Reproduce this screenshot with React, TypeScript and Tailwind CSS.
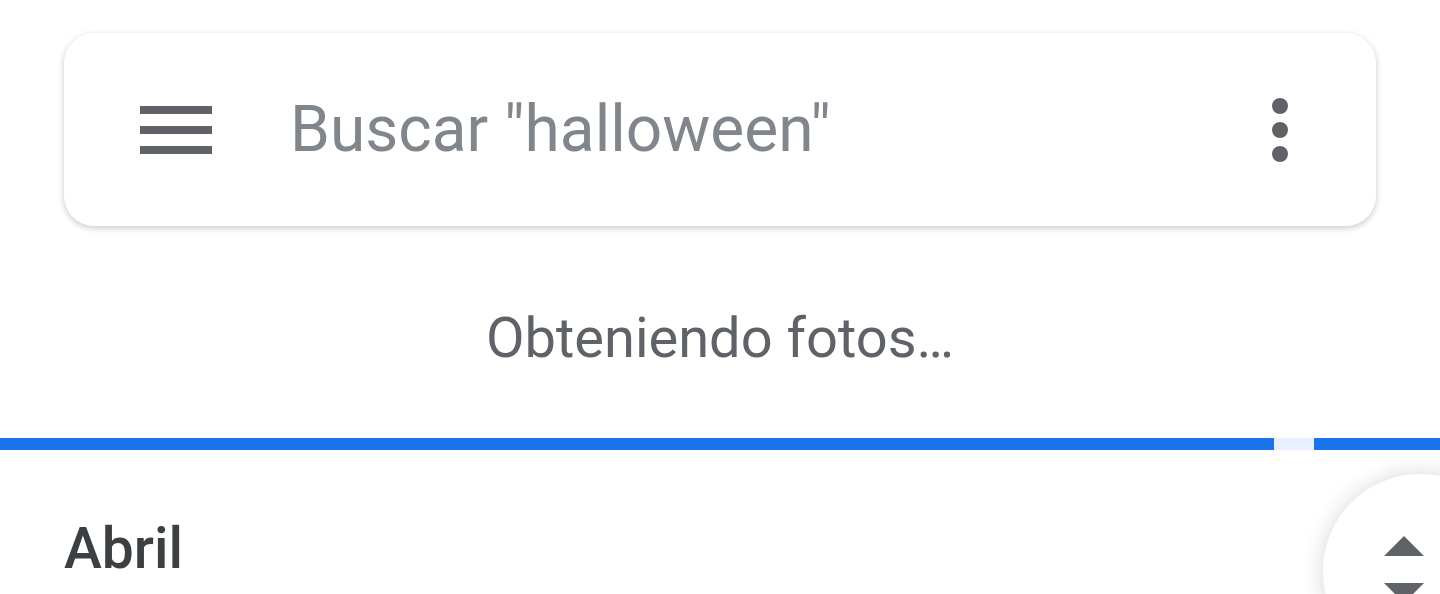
import { useState } from 'react';

const SearchBar = ({ placeholder }: { placeholder: string }) => (
  <div className="mx-16 mt-[33px] h-[193px] rounded-[30px] bg-white shadow-[0_2px_6px_rgba(0,0,0,0.22)] flex items-center pl-[76px] pr-[88px]">
    {/* Menu */}
    <div className="w-[72px] flex flex-col gap-3 shrink-0">
      <span className="block h-2 bg-[#5f6368]" />
      <span className="block h-2 bg-[#5f6368]" />
      <span className="block h-2 bg-[#5f6368]" />
    </div>
    <p className="ml-[78px] flex-1 text-[64px] leading-none text-[#80868b]">
      {placeholder}
    </p>
    {/* More */}
    <div className="flex flex-col gap-2 shrink-0">
      <span className="block w-4 h-4 rounded-full bg-[#5f6368]" />
      <span className="block w-4 h-4 rounded-full bg-[#5f6368]" />
      <span className="block w-4 h-4 rounded-full bg-[#5f6368]" />
    </div>
  </div>
);

const ProgressBar = () => (
  <div className="flex h-3 w-full">
    <div className="w-[1274px] bg-[#1a73e8]" />
    <div className="w-10 bg-[#e8f0fe]" />
    <div className="flex-1 bg-[#1a73e8]" />
  </div>
);

const App = () => {
  const [query] = useState('Buscar "halloween"');

  return (
    <div className="relative w-[1440px] h-[594px] overflow-hidden bg-white font-['Roboto',sans-serif]">
      <SearchBar placeholder={query} />

      <p className="mt-[84px] text-center text-[56px] leading-none text-[#5f6368]">
        Obteniendo fotos…
      </p>

      <div className="mt-[72px]">
        <ProgressBar />
      </div>

      <h2 className="ml-16 mt-[70px] text-[57px] leading-none font-medium text-[#3c4043]">Abril</h2>

      {/* Scroll thumb */}
      <div className="absolute left-[1323px] top-[474px] w-[194px] h-[194px] rounded-full bg-white shadow-[0_0_22px_rgba(0,0,0,0.16)]">
        <div className="absolute left-[61px] top-[62px] flex flex-col items-center gap-[27px]">
          <span className="block w-0 h-0 border-l-[20px] border-r-[20px] border-b-[20px] border-l-transparent border-r-transparent border-b-[#5f6368]" />
          <span className="block w-0 h-0 border-l-[20px] border-r-[20px] border-t-[20px] border-l-transparent border-r-transparent border-t-[#5f6368]" />
        </div>
      </div>
    </div>
  );
};

export default App;
